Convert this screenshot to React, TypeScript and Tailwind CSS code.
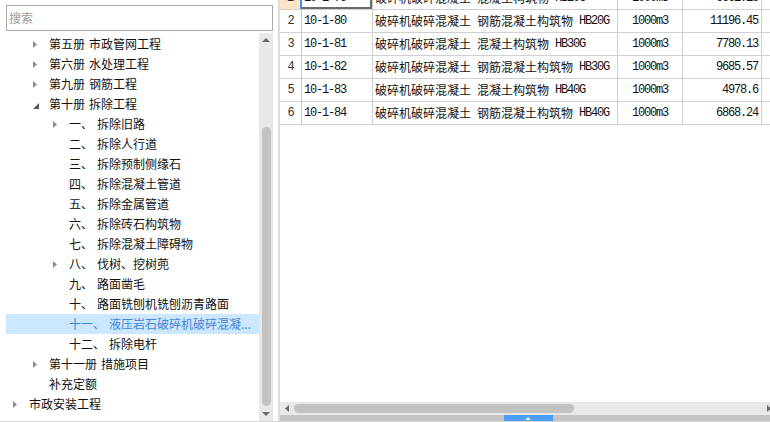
import React from "react";

type TreeItem = {
  level: number;
  arrow: "none" | "collapsed" | "expanded";
  prefix: string;
  name?: string;
  selected?: boolean;
};

const tree: TreeItem[] = [
  { level: 2, arrow: "collapsed", prefix: "第五册", name: "市政管网工程" },
  { level: 2, arrow: "collapsed", prefix: "第六册", name: "水处理工程" },
  { level: 2, arrow: "collapsed", prefix: "第九册", name: "钢筋工程" },
  { level: 2, arrow: "expanded", prefix: "第十册", name: "拆除工程" },
  { level: 3, arrow: "collapsed", prefix: "一、", name: "拆除旧路" },
  { level: 3, arrow: "none", prefix: "二、", name: "拆除人行道" },
  { level: 3, arrow: "none", prefix: "三、", name: "拆除预制侧缘石" },
  { level: 3, arrow: "none", prefix: "四、", name: "拆除混凝土管道" },
  { level: 3, arrow: "none", prefix: "五、", name: "拆除金属管道" },
  { level: 3, arrow: "none", prefix: "六、", name: "拆除砖石构筑物" },
  { level: 3, arrow: "none", prefix: "七、", name: "拆除混凝土障碍物" },
  { level: 3, arrow: "collapsed", prefix: "八、", name: "伐树、挖树蔸" },
  { level: 3, arrow: "none", prefix: "九、", name: "路面凿毛" },
  { level: 3, arrow: "none", prefix: "十、", name: "路面铣刨机铣刨沥青路面" },
  { level: 3, arrow: "none", prefix: "十一、", name: "液压岩石破碎机破碎混凝...", selected: true },
  { level: 3, arrow: "none", prefix: "十二、", name: "拆除电杆" },
  { level: 2, arrow: "collapsed", prefix: "第十一册", name: "措施项目" },
  { level: 2, arrow: "none", prefix: "补充定额" },
  { level: 1, arrow: "collapsed", prefix: "市政安装工程" },
];

const rows = [
  { n: 1, code: "10-1-79", a: "破碎机破碎混凝土", b: "混凝土构筑物", c: "HB20G", unit: "1000m3", amt: "6661.18" },
  { n: 2, code: "10-1-80", a: "破碎机破碎混凝土", b: "钢筋混凝土构筑物", c: "HB20G", unit: "1000m3", amt: "11196.45" },
  { n: 3, code: "10-1-81", a: "破碎机破碎混凝土", b: "混凝土构筑物", c: "HB30G", unit: "1000m3", amt: "7780.13" },
  { n: 4, code: "10-1-82", a: "破碎机破碎混凝土", b: "钢筋混凝土构筑物", c: "HB30G", unit: "1000m3", amt: "9685.57" },
  { n: 5, code: "10-1-83", a: "破碎机破碎混凝土", b: "混凝土构筑物", c: "HB40G", unit: "1000m3", amt: "4978.6" },
  { n: 6, code: "10-1-84", a: "破碎机破碎混凝土", b: "钢筋混凝土构筑物", c: "HB40G", unit: "1000m3", amt: "6868.24" },
];

const mono = "font-['Liberation_Mono','Noto_Sans_CJK_SC',monospace] text-[12px] tracking-[-1.2px]";

function Arrow({ kind }: { kind: TreeItem["arrow"] }) {
  return (
    <span className="flex h-[20px] w-[16px] shrink-0 items-center pl-[7px]">
      {kind === "collapsed" && (
        <svg width="4" height="7" viewBox="0 0 4 7">
          <polygon points="0,0 4,3.5 0,7" fill="#8c8c8c" />
        </svg>
      )}
      {kind === "expanded" && (
        <svg width="6" height="6" viewBox="0 0 6 6" className="mt-[3px]">
          <polygon points="6,0 6,6 0,6" fill="#5a5a5a" />
        </svg>
      )}
    </span>
  );
}

function TreeRow({ item }: { item: TreeItem }) {
  const pad = item.level === 1 ? "pl-0" : item.level === 2 ? "pl-[20px]" : "pl-[40px]";
  return (
    <div
      className={`flex h-[20px] items-center pr-[4px] ${pad} ${
        item.selected ? "bg-[#cce8ff] text-[#3f84da]" : "text-[#111]"
      }`}
    >
      <Arrow kind={item.arrow} />
      <span className="ml-[7px] whitespace-nowrap leading-[20px]">
        {item.prefix}
        {item.name && <span className="ml-[4px]">{item.name}</span>}
      </span>
    </div>
  );
}

function LeftPanel() {
  return (
    <div className="flex h-full w-[278px] shrink-0 flex-col pl-[6px] pr-[5px]">
      <div className="mt-[5px] flex h-[26px] items-center border border-[#ababab] bg-white pl-[2px] text-[12px] text-[#9a9a9a]">
        搜索
      </div>
      <div className="mt-[2px] flex min-h-0 flex-1">
        <div className="min-w-0 flex-1 pt-[1px] text-[12px]">
          {tree.map((t, i) => (
            <TreeRow key={i} item={t} />
          ))}
        </div>
        <div className="flex w-[14px] shrink-0 flex-col bg-[#e8e8e8]">
          <div className="flex h-[14px] items-center justify-center">
            <svg width="8" height="4" viewBox="0 0 8 4">
              <polygon points="0,4 4,0 8,4" fill="#6a6a6a" />
            </svg>
          </div>
          <div className="mx-auto mb-[1px] mt-[80px] w-[9px] flex-1 rounded-full bg-[#c2c2c2]" />
          <div className="flex h-[14px] items-center justify-center">
            <svg width="8" height="4" viewBox="0 0 8 4">
              <polygon points="0,0 8,0 4,4" fill="#6a6a6a" />
            </svg>
          </div>
        </div>
      </div>
    </div>
  );
}

function Table() {
  return (
    <div className="mt-[-13px] flex flex-col">
      {rows.map((r) => {
        const sel = r.n === 1;
        return (
          <div key={r.n} className="flex h-[23px] border-b border-[#d0d0d0] text-[12px] leading-[22px] text-[#111]">
            <div
              className={`flex w-[22px] shrink-0 items-center justify-center text-[#333] ${mono} ${
                sel ? "border-r-2 border-[#3d8ee4] bg-[#fde4c6]" : "border-r border-[#c8c8c8]"
              }`}
            >
              {r.n}
            </div>
            <div
              className={`w-[71px] shrink-0 border-r border-[#d0d0d0] pl-[2px] ${mono} ${
                sel ? "shadow-[inset_-2px_-2px_0_#6b6b6b]" : ""
              }`}
            >
              {r.code}
            </div>
            <div className="flex w-[245px] shrink-0 items-center whitespace-nowrap border-r border-[#d0d0d0] pl-[2px]">
              <span>{r.a}</span>
              <span className="ml-[6px]">{r.b}</span>
              <span className={`ml-[6px] ${mono}`}>{r.c}</span>
            </div>
            <div className={`w-[65px] shrink-0 border-r border-[#d0d0d0] text-center ${mono}`}>{r.unit}</div>
            <div className={`w-[79px] shrink-0 border-r border-[#d0d0d0] pr-[3px] text-right ${mono}`}>{r.amt}</div>
            <div className="flex-1" />
          </div>
        );
      })}
    </div>
  );
}

function RightPanel() {
  return (
    <div className="flex h-full w-[496px] shrink-0 flex-col">
      <div className="min-h-0 flex-1 overflow-hidden bg-white">
        <Table />
      </div>
      <div className="flex h-[13px] shrink-0 items-center bg-[#e8e8e8]">
        <div className="flex w-[14px] shrink-0 items-center justify-center">
          <svg width="4" height="7" viewBox="0 0 4 7">
            <polygon points="4,0 0,3.5 4,7" fill="#6a6a6a" />
          </svg>
        </div>
        <div className="h-[9px] w-[280px] rounded-full bg-[#c2c2c2]" />
        <div className="flex-1" />
        <div className="flex w-[14px] shrink-0 items-center justify-center">
          <svg width="4" height="7" viewBox="0 0 4 7">
            <polygon points="0,0 4,3.5 0,7" fill="#6a6a6a" />
          </svg>
        </div>
      </div>
      <div className="flex h-[6px] shrink-0 justify-center bg-[#c4c4c4]">
        <div className="flex w-[49px] items-center justify-center bg-[#4a9ef6]">
          <svg width="6" height="3" viewBox="0 0 6 3">
            <polygon points="0,3 3,0 6,3" fill="#ffffff" />
          </svg>
        </div>
      </div>
    </div>
  );
}

export default function App() {
  return (
    <div className="flex h-[422px] w-[770px] flex-col overflow-hidden bg-white font-['Noto_Sans_CJK_SC',sans-serif]">
      <div className="flex h-[421px] shrink-0">
        <LeftPanel />
        <div className="h-full w-[2px] shrink-0 bg-[#dcdcdc]" />
        <RightPanel />
      </div>
      <div className="h-px shrink-0 bg-[#d6d6d6]" />
    </div>
  );
}
